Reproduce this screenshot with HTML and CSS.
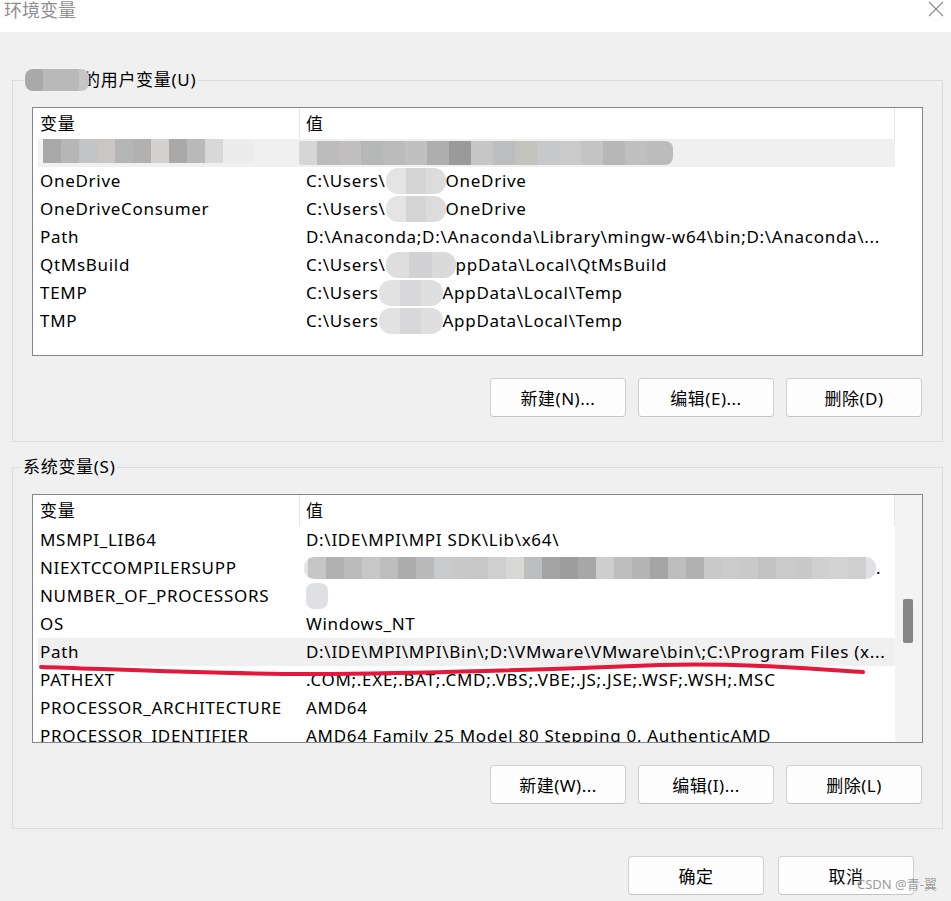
FILE: index.html
```html
<!DOCTYPE html>
<html lang="zh-CN">
<head>
<meta charset="utf-8">
<title>环境变量</title>
<link rel="stylesheet" href="styles.css">
</head>
<body>
<div class="window">
  <div class="titlebar">
    <span class="title">环境变量</span>
    <svg class="close" width="16" height="16" viewBox="0 0 16 16"><path d="M1 1 L15 15 M15 1 L1 15" stroke="#8a8a8a" stroke-width="1.1" fill="none"/></svg>
  </div>

  <fieldset class="group">
    <legend class="legend"><span class="blur blur-label"></span>的用户变量(U)</legend>
    <div class="list">
      <div class="list-main">
        <div class="list-head"><div class="hcell hc1">变量</div><div class="hcell hc2">值</div></div>
        <div class="row hl"><div class="c1"><span class="blur blur-uvar"></span></div><div class="c2"><span class="blur blur-uval"></span></div></div>
        <div class="row"><div class="c1">OneDrive</div><div class="c2">C:\Users\<span class="blur blur-user"></span>OneDrive</div></div>
        <div class="row"><div class="c1">OneDriveConsumer</div><div class="c2">C:\Users\<span class="blur blur-user"></span>OneDrive</div></div>
        <div class="row"><div class="c1">Path</div><div class="c2">D:\Anaconda;D:\Anaconda\Library\mingw-w64\bin;D:\Anaconda\...</div></div>
        <div class="row"><div class="c1">QtMsBuild</div><div class="c2">C:\Users\<span class="blur blur-user2"></span>ppData\Local\QtMsBuild</div></div>
        <div class="row"><div class="c1">TEMP</div><div class="c2">C:\Users<span class="blur blur-user3"></span>AppData\Local\Temp</div></div>
        <div class="row"><div class="c1">TMP</div><div class="c2">C:\Users<span class="blur blur-user3"></span>AppData\Local\Temp</div></div>
      </div>
      <div class="scroll-empty"></div>
    </div>
    <div class="btns">
      <button class="btn">新建(N)...</button>
      <button class="btn">编辑(E)...</button>
      <button class="btn">删除(D)</button>
    </div>
  </fieldset>

  <fieldset class="group group-sys">
    <legend class="legend legend-sys">系统变量(S)</legend>
    <div class="list">
      <div class="list-main">
        <div class="list-head"><div class="hcell hc1">变量</div><div class="hcell hc2">值</div></div>
        <div class="row"><div class="c1">MSMPI_LIB64</div><div class="c2">D:\IDE\MPI\MPI SDK\Lib\x64\</div></div>
        <div class="row"><div class="c1">NIEXTCCOMPILERSUPP</div><div class="c2"><span class="blur blur-niext"></span>.</div></div>
        <div class="row"><div class="c1">NUMBER_OF_PROCESSORS</div><div class="c2"><span class="blur blur-num"></span></div></div>
        <div class="row"><div class="c1">OS</div><div class="c2">Windows_NT</div></div>
        <div class="row hl"><div class="c1">Path</div><div class="c2">D:\IDE\MPI\MPI\Bin\;D:\VMware\VMware\bin\;C:\Program Files (x...</div></div>
        <div class="row"><div class="c1">PATHEXT</div><div class="c2">.COM;.EXE;.BAT;.CMD;.VBS;.VBE;.JS;.JSE;.WSF;.WSH;.MSC</div></div>
        <div class="row"><div class="c1">PROCESSOR_ARCHITECTURE</div><div class="c2">AMD64</div></div>
        <div class="row"><div class="c1">PROCESSOR_IDENTIFIER</div><div class="c2">AMD64 Family 25 Model 80 Stepping 0, AuthenticAMD</div></div>
      </div>
      <div class="scrollbar"><div class="thumb"></div></div>
    </div>
    <div class="btns">
      <button class="btn">新建(W)...</button>
      <button class="btn">编辑(I)...</button>
      <button class="btn">删除(L)</button>
    </div>
  </fieldset>

  <div class="footer">
    <button class="btn">确定</button>
    <button class="btn">取消</button>
  </div>

  <svg class="annot" width="951" height="901" viewBox="0 0 951 901">
    <path d="M41,667 C110,669 230,675 330,674 C430,673 560,669 660,665 C740,663 800,668 863,672" stroke="#e3183a" stroke-width="4" fill="none" stroke-linecap="round"/>
  </svg>
  <div class="watermark">CSDN @青-翼</div>
</div>
</body>
</html>
```

FILE: styles.css
```css
* { box-sizing: border-box; }
html, body { margin: 0; padding: 0; }
body {
  width: 951px;
  height: 901px;
  overflow: hidden;
  background: #f0f0f0;
  font-family: "Noto Sans", "Noto Sans CJK SC", sans-serif;
  font-size: 17px;
  letter-spacing: 0.7px;
  color: #000;
}
.window {
  position: relative;
  width: 951px;
  height: 901px;
}
.titlebar {
  height: 32px;
  background: #fff;
  display: flex;
  justify-content: space-between;
  align-items: flex-start;
  padding: 0 6px 0 4px;
}
.title {
  font-family: "Noto Sans CJK SC", sans-serif;
  font-size: 18px;
  line-height: 19px;
  letter-spacing: 0;
  color: #8f8f8f;
  margin-top: 0;
}
.close { margin-top: 1px; margin-right: 1px; }

.group {
  margin: 38px 8px 0 12px;
  border: 1px solid #dcdcdc;
  padding: 17px 19px 24px 19px;
  min-width: 0;
}
.group-sys { margin-top: 15px; }
.legend {
  font-size: 17px;
  line-height: 20px;
  height: 20px;
  padding: 0 2px;
  margin-left: -9px;
  display: flex;
  align-items: center;
  white-space: nowrap;
}
.legend-sys { margin-left: -11px; }

.list {
  height: 249px;
  border: 1px solid #828790;
  background: #fff;
  display: flex;
  overflow: hidden;
}
.list-main {
  width: 862px;
  flex: none;
}
.list-head {
  display: flex;
  height: 31px;
}
.hcell {
  height: 31px;
  line-height: 31px;
  border-right: 1px solid #e5e5e5;
  white-space: nowrap;
}
.hc1 { width: 267px; padding-left: 7px; }
.hc2 { width: 595px; padding-left: 6px; }

.row {
  display: flex;
  height: 28px;
  line-height: 28px;
  margin-left: 5px;
  width: 857px;
  white-space: nowrap;
  overflow: hidden;
}
.row.hl { background: #f0f0f0; }
.c1 { width: 261px; padding-left: 2px; flex: none; overflow: hidden; }
.c2 { flex: 1; padding-left: 7px; overflow: hidden; display: flex; align-items: center; }

.scroll-empty { flex: 1; }
.scrollbar {
  flex: 1;
  background: #f3f3f3;
  padding: 104px 0 0 8px;
}
.thumb {
  width: 10px;
  height: 44px;
  background: #868686;
  border-radius: 2px;
}

.btns {
  display: flex;
  justify-content: flex-end;
  gap: 12px;
  margin-top: 22px;
  padding-right: 1px;
}
.btn {
  width: 136px;
  height: 39px;
  background: #fdfdfd;
  border: 1px solid #d0d0d0;
  border-bottom-color: #c4c4c4;
  border-radius: 4px;
  font-family: "Noto Sans", "Noto Sans CJK SC", sans-serif;
  font-size: 17px;
  letter-spacing: 0.5px;
  color: #000;
  padding: 0;
}
.footer {
  display: flex;
  justify-content: flex-end;
  gap: 14px;
  margin-top: 27px;
  padding-right: 37px;
}

/* blurred (mosaic) regions */
.blur {
  display: inline-block;
  flex: none;
  filter: blur(0.6px);
  border-radius: 8px;
}
.blur-label {
  width: 64px;
  height: 22px;
  margin-right: -6px;
  position: relative;
  background: linear-gradient(90deg, #a9a9a9 0 18px, #b9b9b9 18px 54px, #c6c6c6 54px 64px);
}
.blur-uvar {
  width: 220px;
  height: 24px;
  margin-left: -5px;
  background: linear-gradient(90deg, #f4f4f4 0 8px, #a8a8a8 8px 26px, #b6b6b6 26px 44px, #c3c4c6 44px 62px, #c9c6c3 62px 80px, #b4b5b7 80px 98px, #b1b1b1 98px 116px, #d4d1ce 116px 134px, #a9a9a9 134px 152px, #b9b9b9 152px 170px, #d8d8d8 170px 188px, #ececec 188px 220px);
}
.blur-uval {
  width: 378px;
  height: 24px;
  margin-left: -11px;
  background: linear-gradient(90deg, #d6d6d6 0 22px, #bcbcbc 22px 44px, #c2c0bf 44px 66px, #b5b8b6 66px 88px, #bbbbbb 88px 110px, #c0c0c0 110px 132px, #aeaeae 132px 154px, #9a9a9a 154px 176px, #c6c6c4 176px 198px, #bcbdbf 198px 220px, #c4c2bd 220px 242px, #c7c8ca 242px 264px, #cacaca 264px 286px, #c4c4c6 286px 308px, #b7b7b7 308px 330px, #c0c0c0 330px 352px, #bcbcbc 352px 378px);
}
.blur-user {
  width: 60px;
  height: 26px;
  border-radius: 12px;
  background: linear-gradient(90deg, #e4e4e4 0 20px, #d3d4d6 20px 40px, #dcdcdc 40px 60px);
}
.blur-user2 {
  width: 70px;
  height: 26px;
  border-radius: 12px;
  background: linear-gradient(90deg, #dedede 0 23px, #d2d2d4 23px 46px, #dadada 46px 70px);
}
.blur-user3 {
  width: 64px;
  height: 26px;
  border-radius: 12px;
  background: linear-gradient(90deg, #e2e2e2 0 21px, #d8d8da 21px 42px, #dfdfdf 42px 64px);
}
.blur-niext {
  width: 572px;
  height: 22px;
  margin-left: -2px;
  border-radius: 10px;
  background: linear-gradient(90deg, #e4e4e4 0 4px, #c6c6c6 4px 22px, #b0b0b0 22px 40px, #bbbbbb 40px 58px, #c7c7c7 58px 76px, #bdbdbd 76px 94px, #acacac 94px 112px, #b9b9b9 112px 130px, #c9cacc 130px 148px, #c8c8c8 148px 166px, #c6c7c7 166px 184px, #cfcfcf 184px 202px, #d7d7d3 202px 220px, #bcbdc0 220px 238px, #a3a3a3 238px 256px, #9d9d9d 256px 274px, #a7a7a7 274px 292px, #cdcfcf 292px 310px, #bebebe 310px 328px, #b4b4b4 328px 346px, #a5a5a5 346px 364px, #bdbdbd 364px 382px, #b0b0b0 382px 400px, #c9c9c9 400px 418px, #cccccc 418px 436px, #c9c9c9 436px 454px, #c2c2c2 454px 472px, #cacaca 472px 490px, #c8c8c8 490px 508px, #d0d0d0 508px 526px, #d3d3d3 526px 544px, #d0d0d0 544px 562px, #e0e0e4 562px 572px);
}
.blur-num {
  width: 22px;
  height: 26px;
  border-radius: 8px;
  background: #dfe0e3;
}

.annot {
  position: absolute;
  left: 0;
  top: 0;
  pointer-events: none;
}
.watermark {
  position: absolute;
  left: 857px;
  top: 876px;
  font-family: "Noto Sans", "Noto Sans CJK SC", sans-serif;
  font-size: 13px;
  line-height: 16px;
  letter-spacing: 0;
  color: rgba(135, 135, 135, 0.85);
  text-shadow: 0 0 2px #fff;
  white-space: nowrap;
}
```
